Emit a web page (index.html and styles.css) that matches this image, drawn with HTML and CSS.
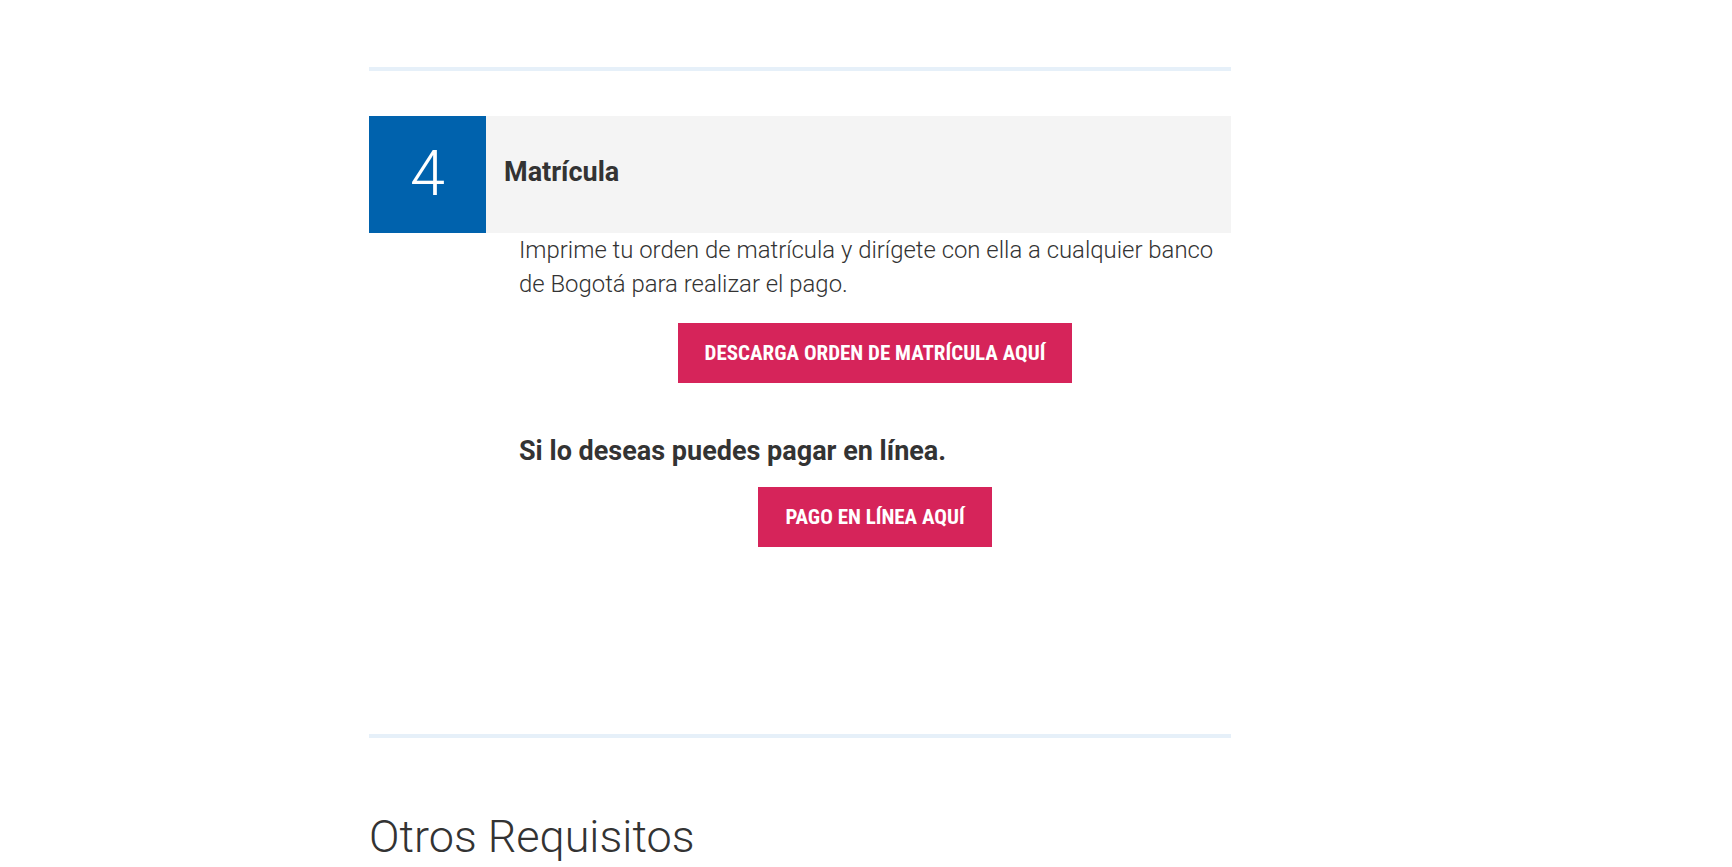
FILE: index.html
```html
<!DOCTYPE html>
<html lang="es">
<head>
<meta charset="utf-8">
<title>Matrícula</title>
<link rel="stylesheet" href="styles.css">
</head>
<body>
<main class="page">
  <hr class="divider divider-top">
  <section class="step">
    <div class="step-header">
      <div class="step-number">4</div>
      <h3 class="step-title">Matrícula</h3>
    </div>
    <div class="step-body">
      <p class="step-text">Imprime tu orden de matrícula y dirígete con ella a cualquier banco de Bogotá para realizar el pago.</p>
      <div class="btn-row">
        <a class="btn" href="#"><span class="btn-label">DESCARGA ORDEN DE MATRÍCULA AQUÍ</span></a>
      </div>
      <h4 class="step-subtitle">Si lo deseas puedes pagar en línea.</h4>
      <div class="btn-row btn-row-second">
        <a class="btn" href="#"><span class="btn-label">PAGO EN LÍNEA AQUÍ</span></a>
      </div>
    </div>
  </section>
  <hr class="divider divider-bottom">
  <h2 class="section-title">Otros Requisitos</h2>
</main>
</body>
</html>
```
FILE: styles.css
```css
* { box-sizing: border-box; }
html, body { margin: 0; padding: 0; background: #fff; }
body {
  font-family: Roboto, "Noto Sans", "Liberation Sans", sans-serif;
  color: #333;
}
.page {
  width: 862px;
  margin-left: 369px;
  padding-top: 67px;
}
.divider {
  border: 0;
  height: 4px;
  background: #e6f0f9;
  margin: 0;
}
.step {
  margin-top: 45px;
}
.step-header {
  display: flex;
  height: 117px;
  background: #f4f4f4;
}
.step-number {
  width: 117px;
  flex: 0 0 117px;
  background: #0062ad;
  color: #fff;
  font-size: 63px;
  font-weight: 300;
  display: flex;
  align-items: center;
  justify-content: center;
  padding-bottom: 2px;
}
.step-title {
  margin: 0;
  padding: 0 0 5px 18px;
  display: flex;
  align-items: center;
  font-size: 27px;
  font-weight: 700;
  color: #333;
}
.step-body {
  margin-left: 150px;
}
.step-text {
  margin: 0;
  font-size: 23.9px;
  line-height: 34px;
  font-weight: 300;
  color: #333;
}
.btn-row {
  display: flex;
  justify-content: center;
  margin-top: 22px;
}
.btn {
  display: inline-block;
  height: 60px;
  line-height: 60px;
  padding: 0 27px;
  background: #d6245a;
  color: #fff;
  text-decoration: none;
}
.btn-label {
  font-family: "Roboto Condensed", "DejaVu Sans Condensed", Roboto, sans-serif;
  font-stretch: condensed;
  font-weight: 700;
  font-size: 21px;
}
.step-subtitle {
  margin: 54px 0 0;
  font-size: 27px;
  line-height: 1.1;
  font-weight: 700;
  color: #333;
}
.btn-row-second {
  margin-top: 20px;
}
.divider-bottom {
  margin-top: 187px;
}
.section-title {
  margin: 72px 0 0;
  font-size: 45px;
  line-height: 1.2;
  font-weight: 300;
  color: #333;
}
```
